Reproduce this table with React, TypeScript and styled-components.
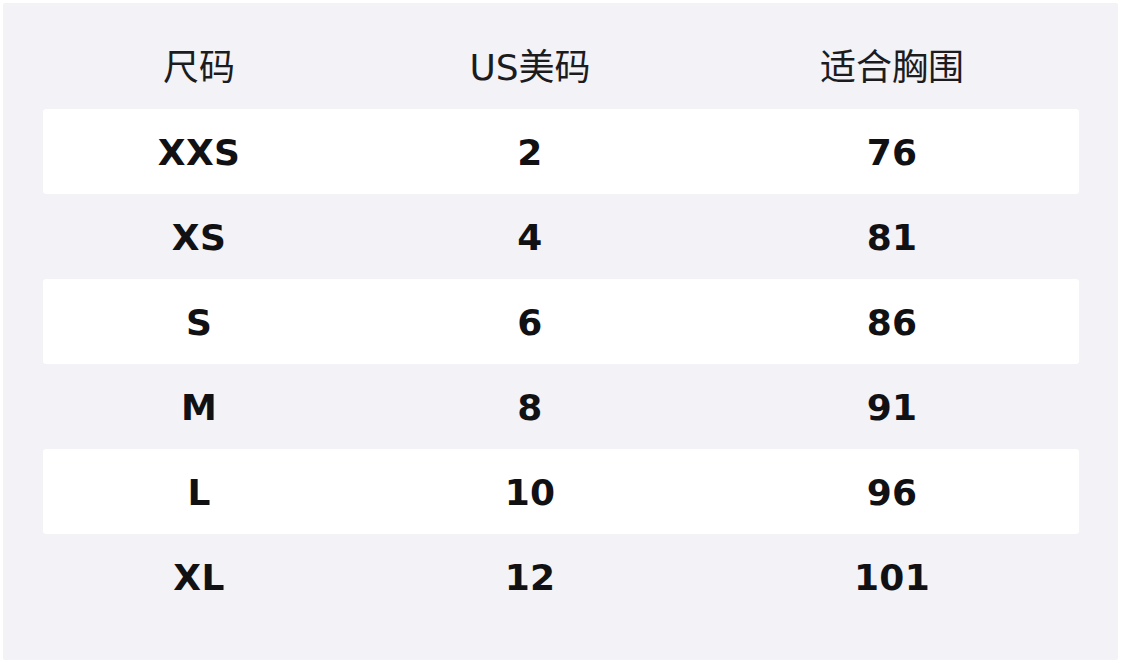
import React from 'react'
import styled, { createGlobalStyle } from 'styled-components'

const GlobalStyle = createGlobalStyle`
  html, body {
    margin: 0;
    padding: 0;
    background: #ffffff;
  }
  body {
    font-family: 'DejaVu Sans', 'Noto Sans CJK SC', sans-serif;
  }
`

const Page = styled.div`
  width: 1122px;
  height: 663px;
  box-sizing: border-box;
  padding: 3px 4px 3px 3px;
`

const Panel = styled.div`
  height: 657px;
  box-sizing: border-box;
  padding: 21px 39px 0 40px;
  background: #f2f2f7;
  border-radius: 2px;
`

const Row = styled.div<{ $striped?: boolean }>`
  display: grid;
  grid-template-columns: 312px 350px 1fr;
  align-items: center;
  height: 85px;
  padding-top: 3px;
  box-sizing: border-box;
  background: ${({ $striped }) => ($striped ? '#ffffff' : 'transparent')};
  border-radius: 3px;
`

const HeadCell = styled.div`
  text-align: center;
  font-size: 36px;
  font-weight: 400;
  color: #1c1c1e;
  line-height: 1;
`

const Cell = styled.div`
  text-align: center;
  font-size: 36px;
  font-weight: 700;
  color: #111114;
  line-height: 1;
  letter-spacing: 0.3px;
`

const sizes = [
  { size: 'XXS', us: '2', bust: '76' },
  { size: 'XS', us: '4', bust: '81' },
  { size: 'S', us: '6', bust: '86' },
  { size: 'M', us: '8', bust: '91' },
  { size: 'L', us: '10', bust: '96' },
  { size: 'XL', us: '12', bust: '101' },
]

export default function App() {
  return (
    <Page>
      <GlobalStyle />
      <Panel>
        <Row>
          <HeadCell>尺码</HeadCell>
          <HeadCell>US美码</HeadCell>
          <HeadCell>适合胸围</HeadCell>
        </Row>
        {sizes.map((r, i) => (
          <Row key={r.size} $striped={i % 2 === 0}>
            <Cell>{r.size}</Cell>
            <Cell>{r.us}</Cell>
            <Cell>{r.bust}</Cell>
          </Row>
        ))}
      </Panel>
    </Page>
  )
}
